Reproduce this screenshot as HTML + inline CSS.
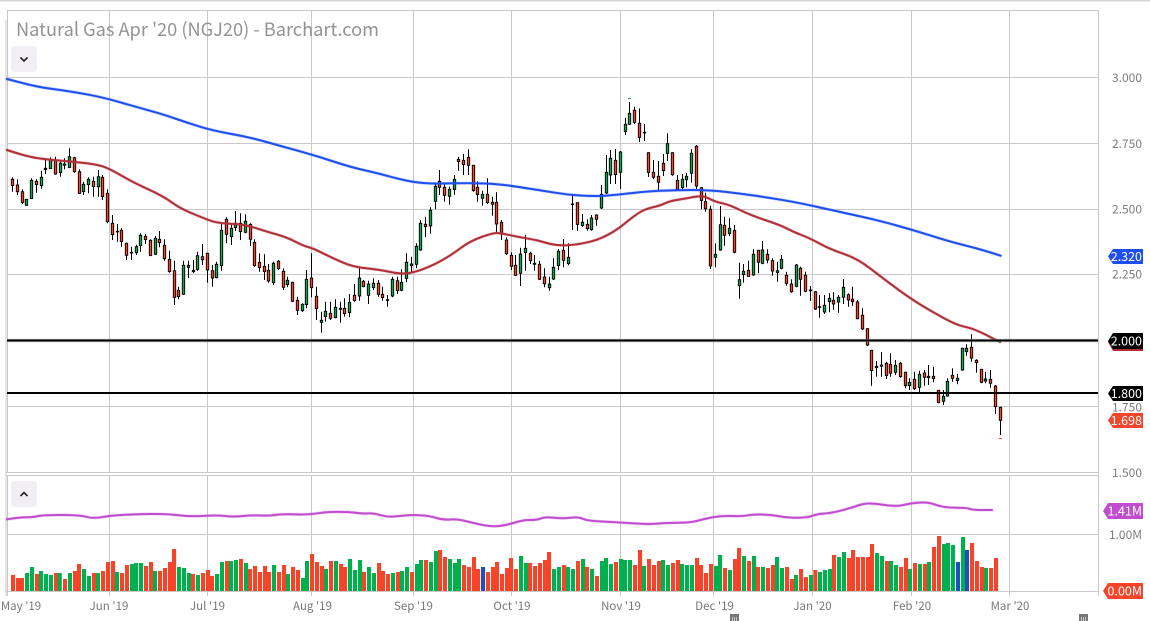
<!DOCTYPE html>
<html>
<head>
<meta charset="utf-8">
<title>Natural Gas Apr '20 (NGJ20) - Barchart.com</title>
<style>
html,body{margin:0;padding:0;background:#fff;width:1150px;height:621px;overflow:hidden}
svg{display:block;position:absolute;left:0;top:0}
text{font-family:"Noto Sans CJK JP","Liberation Sans",sans-serif}
.y{font-size:12px;fill:#7d7d7d;text-anchor:end}
.m{font-size:11.5px;fill:#777;text-anchor:middle}
.t{font-size:12.5px;fill:#fff;text-anchor:end}
</style>
</head>
<body>
<svg id="c" width="1150" height="621" viewBox="0 0 1150 621" xmlns="http://www.w3.org/2000/svg">
<rect width="1150" height="621" fill="#fff"/>
<rect x="0" y="0" width="1150" height="1.5" fill="#d4d4d4"/>
<g stroke="#c9c9c9" stroke-width="1" fill="none">
<path d="M6 20V596M7.5 10.5V473M7.5 475V596M7 10.5H1098.5V596M7 77.5H1098M7 143.5H1098M7 209.5H1098M7 274.5H1098M7 406.5H1098M6 472.5H1098M6 475.5H1098M7 534.5H1098M6 591.5H1098"/>
<path d="M109.5 10.5V473M109.5 475V596M207.5 10.5V473M207.5 475V596M311.5 10.5V473M311.5 475V596M413.5 10.5V473M413.5 475V596M511.5 10.5V473M511.5 475V596M620.5 10.5V473M620.5 475V596M713.5 10.5V473M713.5 475V596M812.5 10.5V473M812.5 475V596M911.5 10.5V473M911.5 475V596M1009.5 10.5V473M1009.5 475V596"/>
</g>
<g id="vol"></g>
<g id="cd"></g>
<path d="M628 98.500h3" stroke="#08a84f" stroke-width="1" fill="none"/>
<path d="M999 438.500h3" stroke="#f4442a" stroke-width="1" fill="none"/>
<g id="ma" fill="none" stroke-linejoin="round" stroke-linecap="round">
<polyline stroke="#1f4ff0" stroke-width="2" points="7,79 27,84.3 43,87.7 70,91.3 103,97.3 133,106 163,114.3 187,122.7 213,130.7 250,137.3 283,146.7 317,156 350,167 377,173 400,179.3 417,182.7 437,183.7 473,183 497,184 517,186.7 543,190.7 567,194.7 593,196.3 617,195 643,191.7 677,190 707,190 733,192.7 767,197.3 800,203 840,212 877,220 913,230 950,241.7 977,248.3 1000.7,255.7"/>
<polyline stroke="#b03038" stroke-width="2" points="7,150 27,156.7 50,160 73,161.7 100,165 113,170.7 133,182.3 163,196 180,208.3 200,216.7 217,223.3 243,224 267,231.7 287,237.3 303,245.7 313,248.3 333,258.3 353,267 377,269.3 400,274 413,272.7 430,266.7 450,256 470,241 493,233 500,233 520,237.3 537,240 553,245 570,245.7 597,240.7 617,230 633,216.7 645,209 660,205.7 670,201 683,199 697,196.3 705,196.3 715,201.7 730,205 750,215 780,225 793,231.7 810,238.3 830,249.3 857,258.3 883,278.3 910,298.3 932,311.7 957,325.3 973,328.3 1000,342"/>
<polyline stroke="#c04ecf" stroke-width="2" points="7,519.3 20,517.3 33,517.3 43,515 80,515 93,518.7 110,515.7 133,514.3 167,513.7 190,516.7 217,515 233,517 253,515 267,516 283,514 310,514.7 327,511.7 350,512 363,513.7 373,513 387,517 400,516 413,514.7 430,516 443,520 458,519 477,524 493,526.7 507,525 523,520 537,520 545,516.7 563,518.7 578,516.7 587,520.7 607,521.7 633,523.3 650,524.3 667,522.7 690,522.7 703,519.3 720,515.7 743,516.3 753,514.3 773,515 787,517.7 807,517.7 817,514 830,513.3 850,508.3 863,503.7 873,503.3 897,506.7 910,503.3 928,502 938,505.7 948,507.7 967,507.7 973,510 992,510"/>
</g>
<path d="M7 340.500H1098" stroke="#999" stroke-width="3.400" fill="none" opacity=".6"/>
<path d="M7 340.500H1098" stroke="#000" stroke-width="2" fill="none"/>
<path d="M7 393H1098" stroke="#000" stroke-width="2" fill="none"/>

<text x="16" y="36" font-size="18.5" fill="#939393" textLength="363" lengthAdjust="spacingAndGlyphs">Natural Gas Apr '20 (NGJ20) - Barchart.com</text>

<rect x="11" y="46" width="26" height="26" rx="4" fill="#f1eff3"/>
<path d="M20.500 57.500l3.500 3.500 3.500-3.500" fill="none" stroke="#222" stroke-width="1.600"/>
<rect x="11" y="481" width="26" height="26" rx="4" fill="#f1eff3"/>
<path d="M20.500 496l3.500-3.500 3.500 3.500" fill="none" stroke="#222" stroke-width="1.600"/>

<text class="y" x="1142" y="82">3.000</text>
<text class="y" x="1142" y="148">2.750</text>
<text class="y" x="1142" y="213.500">2.500</text>
<text class="y" x="1142" y="278.500">2.250</text>
<text class="y" x="1142" y="411.500">1.750</text>
<text class="y" x="1142" y="477">1.500</text>
<text class="y" x="1142" y="539">1.00M</text>

<path d="M1108 256.500l5-7.500h30v15h-30z" fill="#1f4ff0"/>
<text class="t" x="1142" y="261">2.320</text>
<path d="M1108 342l5-8h30v17h-30z" fill="#b03038"/>
<path d="M1108 341l5-8h30v16h-30z" fill="#000"/>
<text class="t" x="1142" y="345.500">2.000</text>
<path d="M1108 393.500l5-7.500h30v15h-30z" fill="#000"/>
<text class="t" x="1142" y="398">1.800</text>
<path d="M1108 420.500l5-7.500h30v15h-30z" fill="#f4442a"/>
<text class="t" x="1142" y="425">1.698</text>
<path d="M1103 511l5-8h35v16h-35z" fill="#c04ecf"/>
<text class="t" x="1142" y="515.500">1.41M</text>
<path d="M1103 591l5-8h35v16h-35z" fill="#f4442a"/>
<text class="t" x="1142" y="595.500">0.00M</text>

<text class="m" x="21" y="610">May '19</text>
<text class="m" x="109" y="610">Jun '19</text>
<text class="m" x="207.500" y="610">Jul '19</text>
<text class="m" x="312.500" y="610">Aug '19</text>
<text class="m" x="413.500" y="610">Sep '19</text>
<text class="m" x="512" y="610">Oct '19</text>
<text class="m" x="621" y="610">Nov '19</text>
<text class="m" x="714.500" y="610">Dec '19</text>
<text class="m" x="812.500" y="610">Jan '20</text>
<text class="m" x="912" y="610">Feb '20</text>
<text class="m" x="1010" y="610">Mar '20</text>

<g>
<rect x="730" y="614" width="9" height="7" fill="#777"/>
<path d="M732.500 617v4M734.500 617v4M736.500 617v4" stroke="#ddd" stroke-width=".8" fill="none"/>
<rect x="1079" y="614" width="9" height="7" fill="#777"/>
<path d="M1081.500 617v4M1083.500 617v4M1085.500 617v4" stroke="#ddd" stroke-width=".8" fill="none"/>
</g>
</svg>
<script>
var G='#08a84f',R='#f4442a',B='#1f4fb8',NS='http://www.w3.org/2000/svg';
function el(p,n,a){var e=document.createElementNS(NS,n);for(var k in a)e.setAttribute(k,a[k]);p.appendChild(e);return e}
/* candles: x hi top bot lo colour, in zoom coords */
var c7="37,112,118,137,155,r 52,118,135,155,165,r 67,148,155,187,192,r 79,178,178,196,197,g 94,115,121,176,177,g 109,118,124,134,158,r 124,92,112,137,146,g 136,60,85,89,102,g 151,52,58,86,87,g 166,50,62,102,104,r 181,62,70,98,110,g 193,55,72,76,88,g 208,25,50,82,84,g 223,50,53,95,98,r 238,88,95,160,162,r 250,125,133,155,165,g 265,112,118,134,160,g 280,110,124,140,170,r 295,90,110,140,170,g 307,105,112,170,180,r 322,148,160,245,250,r 337,225,250,284,300,r 352,252,274,275,305,r 364,265,271,305,320,r 379,308,310,346,360,r 394,320,337,339,360,g 409,314,320,338,345,g 421,280,286,317,335,g 436,282,289,299,312,r 451,298,301,347,348,r 466,288,295,343,345,g 478,273,298,308,322,r 493,298,316,356,362,r 508,332,358,395,398,r 523,362,392,472,495,r 535,440,451,470,478,r 550,362,376,463,465,g 565,362,376,382,414,g 580,360,391,395,400,g 592,335,347,388,392,g 607,312,350,359,375,r 622,338,340,390,428,r 637,375,392,414,440,r 649,365,373,413,415,g 664,250,271,377,392,g 679,232,238,283,310,r 694,250,265,290,315,g 706,213,250,263,273,g 721,220,250,275,300,r 736,223,244,277,280,g 751,250,253,298,318,r 763,298,307,377,380,r 778,340,367,383,395,r 793,343,379,395,420,r 805,372,391,423,428,r 820,365,370,428,435,g 835,360,364,386,390,r 850,385,394,442,450,r 862,410,421,434,442,g 877,425,427,484,486,r 892,470,481,511,525,r 907,490,493,512,516,g 919,390,418,494,505,g 934,340,414,443,472,r 949,440,469,506,540,r 964,515,541,547,578,g 976,485,514,530,545,g 991,485,520,535,540,r 1006,478,502,533,535,g 1021,485,505,508,548,g 1033,475,505,521,530,r 1048,462,487,518,532,g 1063,432,466,482,485,r 1078,382,414,468,482,g 1090,420,424,440,442,r 1105,422,432,466,492,g 1120,415,430,443,450,g 1135,420,430,463,470,r 1147,440,463,473,482,r 1162,465,479,481,500,g 1177,410,418,468,472,g 1192,410,422,452,462,r";
var c2="3,568,607,631,634,g 18,520,547,595,607,g 33,530,552,557,578,g 49,490,499,553,565,g 61,420,430,510,512,g 76,410,433,440,472,r 91,382,391,438,461,g 106,310,319,364,388,g 118,270,304,322,345,r 133,312,322,346,365,r 148,320,328,349,374,g 163,285,298,329,344,g 175,230,238,245,272,r 190,222,241,254,285,r 205,208,232,256,285,r 220,255,256,332,335,r 232,304,322,344,365,r 247,332,343,355,377,g 262,295,343,368,372,r 277,350,367,373,407,r 289,337,367,432,460,r 304,420,427,462,480,r 319,472,480,521,525,r 334,517,526,559,570,r 346,525,556,586,588,r 361,503,522,580,618,g 376,465,505,518,572,g 391,515,520,542,552,r 403,525,550,553,572,g 418,543,553,598,600,r 433,565,591,611,622,r 448,590,612,623,632,g 460,535,562,597,600,g 475,507,514,557,570,g 490,477,511,541,562,r 505,490,532,551,556,g 518,345,372,373,450,g 532,367,368,433,452,r 547,402,427,437,440,g 562,418,433,446,452,r 574,405,414,449,452,g 589,403,405,418,437,r 604,315,343,384,387,g 619,225,277,339,342,g 631,210,235,285,312,g 646,207,241,284,312,r 661,213,216,277,327,g 676,113,133,155,165,g 688,66,100,133,135,g 703,80,91,127,132,r 718,85,130,172,186,r 733,132,157,157,183,g 745,217,218,277,291,r 760,240,277,292,298,r 775,243,289,307,330,r 790,222,250,272,288,r 802,160,191,220,243,g 817,217,218,284,287,r 832,285,301,328,330,r 847,282,298,323,330,g 859,278,289,299,322,g 874,208,220,280,308,g 889,195,199,318,332,r 904,322,323,361,388,r 916,338,365,386,395,r 931,377,388,558,567,r 946,490,523,532,562,g 961,378,434,510,512,g 973,410,436,466,497,r 988,415,445,461,468,g 1003,435,451,517,520,r 1018,548,599,617,656,g 1030,552,574,584,608,g 1045,542,571,589,590,r";
var c3="10,88,103,165,167,g 25,90,91,127,160,r 37,63,90,130,133,g 52,88,103,120,130,r 67,115,122,153,167,r 82,125,152,157,185,g 94,105,118,145,148,g 109,155,166,190,197,r 124,178,192,215,218,r 139,132,135,199,202,g 151,140,145,178,227,r 166,155,166,214,217,r 181,198,210,212,243,g 196,213,215,267,270,r 208,225,260,262,293,g 223,225,256,276,282,g 238,220,235,245,277,g 250,217,241,252,270,r 265,225,232,246,278,g 280,177,202,232,252,g 295,220,224,240,260,r 307,200,238,245,257,r 322,240,246,296,298,r 337,265,286,327,330,r 352,325,326,375,378,r 364,390,391,452,497,r 379,423,439,443,470,g 394,396,435,439,470,g 409,425,430,467,477,r 421,400,433,460,470,r 436,420,436,457,465,g 451,425,430,470,473,r 466,455,457,497,505,r 478,475,487,497,510,g 493,455,478,506,510,r 508,452,463,502,517,g 523,450,459,472,497,r 535,435,469,473,495,g 550,440,469,476,487,r 565,510,511,548,550,r 580,510,529,544,555,g 592,475,484,528,530,g 607,445,466,475,485,r 622,462,475,482,493,g 637,383,385,450,452,g 649,373,385,395,407,g 664,343,382,414,425,r 679,418,421,428,458,r 694,447,448,487,490,r 706,455,477,483,490,g 721,450,478,490,503,r 736,495,498,560,582,r 751,560,562,601,645,r";
var cd=document.getElementById('cd');
function draw(s,ox,oy){s.split(' ').forEach(function(r){var a=r.split(',');
 var x=Math.floor(ox+a[0]/3)+.5,h=oy+a[1]/3,t=oy+a[2]/3,b=oy+a[3]/3,l=oy+a[4]/3;
 el(cd,'path',{d:'M'+x+' '+h.toFixed(1)+'V'+l.toFixed(1),stroke:'#000','stroke-width':1,fill:'none'});
 el(cd,'rect',{x:x-1.2,y:t.toFixed(1),width:2.4,height:Math.max(b-t,.6).toFixed(1),fill:a[5]=='g'?G:R,stroke:'#000','stroke-width':.9});
});}
draw(c7,0,140);draw(c2,400,80);draw(c3,750,220);
/* volume */
var v4="39,315,r 54,324,r 66,324,r 81,309,g 96,291,g 111,312,r 123,303,g 138,312,g 153,315,g 168,309,r 179,309,g 195,327,r 210,309,g 225,303,r 237,282,r 252,297,g 267,318,g 282,309,r 294,309,g 309,303,r 324,276,r 339,273,r 351,306,g 366,309,r 381,285,r 396,282,g 408,279,g 423,279,g 438,288,r 453,276,r 465,303,g 480,303,r 495,294,r 510,276,r 522,237,r 537,291,g 552,294,g 567,309,g 579,312,r 594,315,g 609,309,r 624,300,r 636,318,r 651,312,g 666,276,g 681,273,r 693,273,g 708,270,g 723,267,r 738,279,g 750,297,r 765,288,r 780,306,r 795,288,r 807,306,r 822,285,g 837,306,r 852,285,r 864,312,g 879,291,r 894,300,r 909,324,g 921,273,g 936,252,r 951,276,r 966,288,r 978,297,g 993,273,r 1008,273,g 1023,282,r 1035,291,r 1050,267,g 1065,300,g 1080,270,g 1092,306,r 1107,291,g 1122,309,g 1137,279,r 1149,303,r 1164,312,r 1179,309,g 1194,306,r";
var v5="6,303,g 21,291,g 36,306,r 51,282,g 63,270,g 78,270,r 93,276,g 108,243,g 120,240,r 135,261,r 150,267,g 165,279,g 177,267,g 192,285,r 207,291,r 222,261,r 234,297,r 249,291,b 264,306,r 279,291,r 291,276,r 306,312,r 321,294,r 333,264,r 348,297,r 363,258,g 378,279,g 390,279,r 405,288,r 420,279,r 435,270,r 447,246,r 462,297,g 477,291,g 492,285,r 504,291,g 519,297,g 534,273,r 549,267,g 561,291,r 576,297,g 591,318,r 606,273,g 618,264,g 633,282,g 648,276,r 663,267,g 675,270,g 690,270,g 705,285,r 720,240,r 732,288,g 747,267,r 762,285,r 777,273,r 789,270,g 804,285,g 819,279,r 834,270,r 846,282,g 861,285,g 876,285,g 891,264,r 903,285,r 918,309,r 933,282,r 948,288,g 960,255,g 975,294,r 990,300,g 1005,267,r 1017,234,r 1032,258,g 1047,273,r";
var v6="12,258,g 24,291,r 39,291,g 54,294,r 69,285,r 81,261,g 96,294,g 111,291,r 126,327,r 138,315,g 153,297,r 168,321,r 183,315,g 196,300,r 210,306,g 225,300,g 240,297,g 252,255,r 267,261,g 282,246,g 297,264,r 309,240,r 324,261,r 339,261,r 354,261,r 366,222,r 381,249,g 396,258,g 411,273,r 423,273,g 438,285,g 453,291,r 468,264,r 480,297,g 495,279,r 510,282,g 525,282,r 537,276,g 552,231,r 567,198,r 582,222,g 594,219,g 609,225,g 624,276,b 639,201,g 651,240,b 666,219,r 681,273,r 696,291,r 708,294,g 723,294,r 738,264,r";
var vol=document.getElementById('vol');
function bars(s,ox){s.split(' ').forEach(function(r){var a=r.split(',');var t=470+a[1]/3;
 el(vol,'rect',{x:(ox+a[0]/3-2).toFixed(1),y:t.toFixed(1),width:4.1,height:(591-t).toFixed(1),fill:a[2]=='g'?'#00b04f':a[2]=='b'?B:R});
});}
bars(v4,0);bars(v5,400);bars(v6,750);
/* smooth moving-average lines, with a faint halo like the original */
var ma=document.getElementById('ma');
Array.prototype.slice.call(ma.querySelectorAll('polyline')).forEach(function(pl){
 var p=pl.getAttribute('points').split(' ').map(function(s){return s.split(',').map(Number)});
 var d='M'+p[0][0]+' '+p[0][1];
 for(var i=1;i<p.length-1;i++){var mx=(p[i][0]+p[i+1][0])/2,my=(p[i][1]+p[i+1][1])/2;
  d+='Q'+p[i][0]+' '+p[i][1]+' '+mx.toFixed(1)+' '+my.toFixed(1);}
 d+='L'+p[p.length-1][0]+' '+p[p.length-1][1];
 var col=pl.getAttribute('stroke');
 el(ma,'path',{d:d,stroke:col,'stroke-width':3.2,opacity:.25});
 el(ma,'path',{d:d,stroke:col,'stroke-width':2});
 ma.removeChild(pl);
});
</script>
</body>
</html>
